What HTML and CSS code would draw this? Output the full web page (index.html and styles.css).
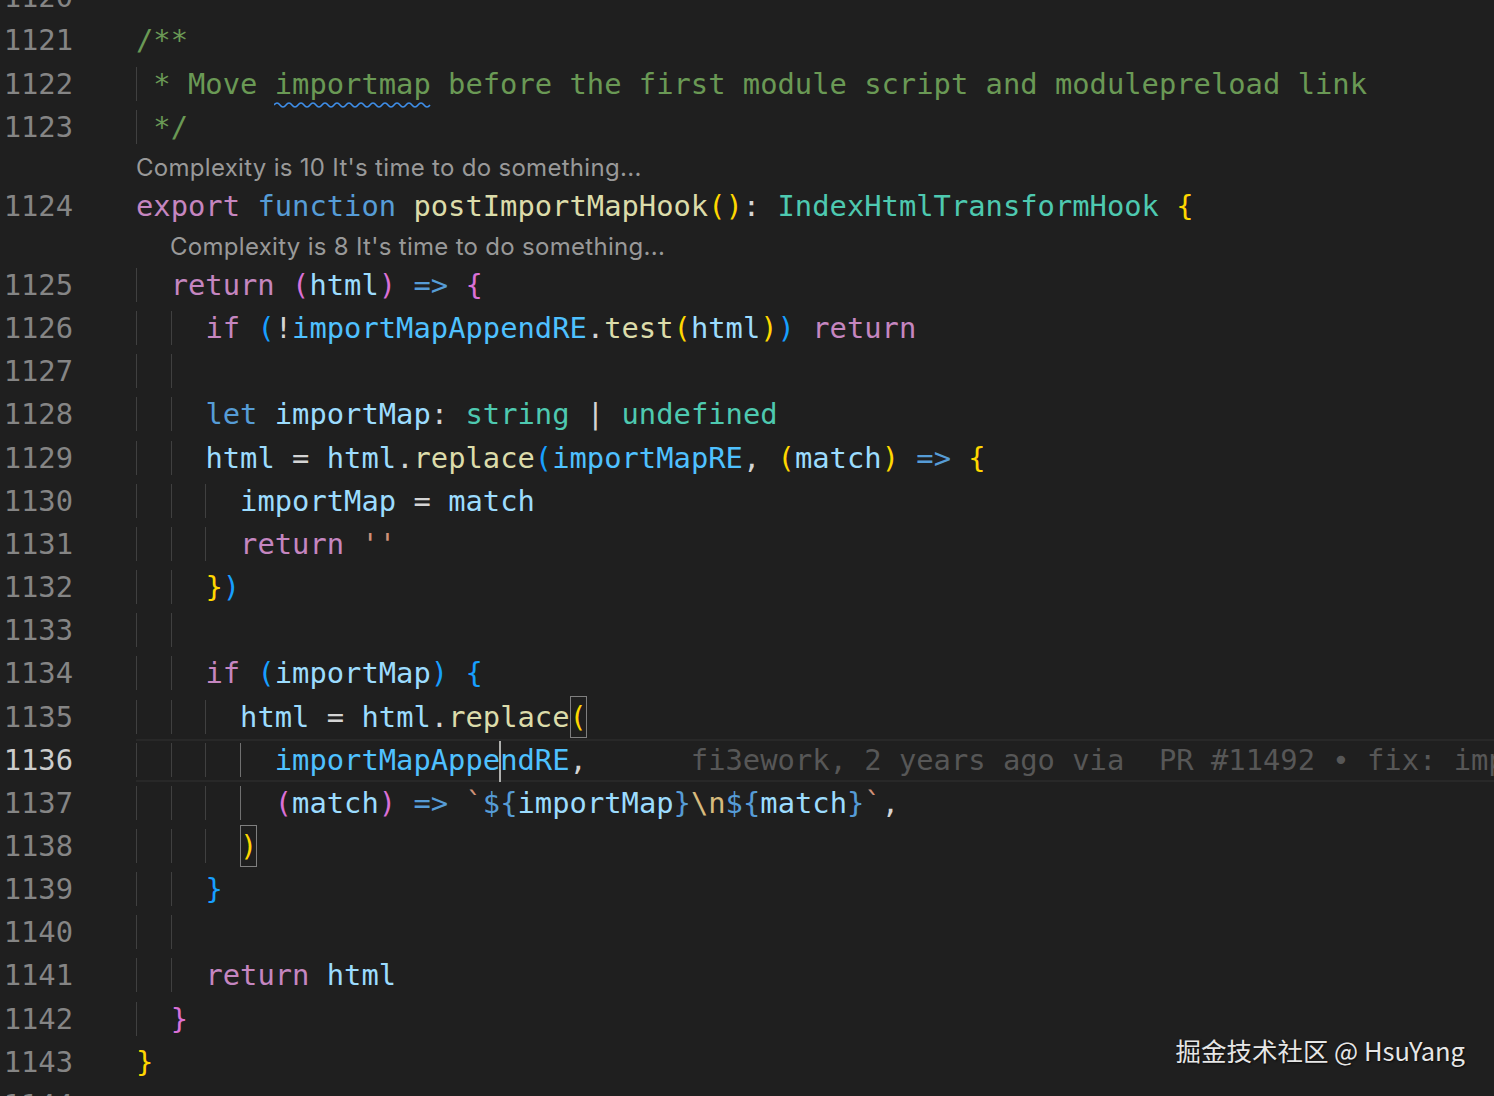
FILE: index.html
```html
<!DOCTYPE html>
<html>
<head>
<meta charset="utf-8">
<link rel="stylesheet" href="styles.css">
</head>
<body>
<div class="editor">
<div class="ln"><span class="num">1120</span><span class="code"></span></div>
<div class="ln"><span class="num">1121</span><span class="code"><span class="c">/**</span></span></div>
<div class="ln"><span class="num">1122</span><span class="code"><span class="ig"> </span><span class="c">* Move <span class="sq">importmap<svg class="wave" width="158" height="8" viewBox="0 0 158 8"><path d="M0 4 Q3 0 6 4 T12 4 T18 4 T24 4 T30 4 T36 4 T42 4 T48 4 T54 4 T60 4 T66 4 T72 4 T78 4 T84 4 T90 4 T96 4 T102 4 T108 4 T114 4 T120 4 T126 4 T132 4 T138 4 T144 4 T150 4 T156 4" fill="none" stroke="#3f8ee8" stroke-width="1.6"/></svg></span> before the first module script and modulepreload link</span></span></div>
<div class="ln"><span class="num">1123</span><span class="code"><span class="ig"> </span><span class="c">*/</span></span></div>
<div class="lens"><span class="lens-txt">Complexity is 10 It's time to do something...</span></div>
<div class="ln"><span class="num">1124</span><span class="code"><span class="k">export</span> <span class="s">function</span> <span class="f">postImportMapHook</span><span class="b1">()</span><span class="o">:</span> <span class="t">IndexHtmlTransformHook</span> <span class="b1">{</span></span></div>
<div class="lens lens-2"><span class="lens-txt">Complexity is 8 It's time to do something...</span></div>
<div class="ln"><span class="num">1125</span><span class="code"><span class="ig">  </span><span class="k">return</span> <span class="b2">(</span><span class="v">html</span><span class="b2">)</span> <span class="s">=&gt;</span> <span class="b2">{</span></span></div>
<div class="ln"><span class="num">1126</span><span class="code"><span class="ig">  </span><span class="ig">  </span><span class="k">if</span> <span class="b3">(</span><span class="o">!</span><span class="cn">importMapAppendRE</span><span class="o">.</span><span class="f">test</span><span class="b1">(</span><span class="v">html</span><span class="b1">)</span><span class="b3">)</span> <span class="k">return</span></span></div>
<div class="ln"><span class="num">1127</span><span class="code"><span class="ig">  </span><span class="ig">  </span></span></div>
<div class="ln"><span class="num">1128</span><span class="code"><span class="ig">  </span><span class="ig">  </span><span class="s">let</span> <span class="v">importMap</span><span class="o">:</span> <span class="t">string</span> <span class="o">|</span> <span class="t">undefined</span></span></div>
<div class="ln"><span class="num">1129</span><span class="code"><span class="ig">  </span><span class="ig">  </span><span class="v">html</span> <span class="o">=</span> <span class="v">html</span><span class="o">.</span><span class="f">replace</span><span class="b3">(</span><span class="cn">importMapRE</span><span class="o">,</span> <span class="b1">(</span><span class="v">match</span><span class="b1">)</span> <span class="s">=&gt;</span> <span class="b1">{</span></span></div>
<div class="ln"><span class="num">1130</span><span class="code"><span class="ig">  </span><span class="ig">  </span><span class="ig">  </span><span class="v">importMap</span> <span class="o">=</span> <span class="v">match</span></span></div>
<div class="ln"><span class="num">1131</span><span class="code"><span class="ig">  </span><span class="ig">  </span><span class="ig">  </span><span class="k">return</span> <span class="str">''</span></span></div>
<div class="ln"><span class="num">1132</span><span class="code"><span class="ig">  </span><span class="ig">  </span><span class="b1">}</span><span class="b3">)</span></span></div>
<div class="ln"><span class="num">1133</span><span class="code"><span class="ig">  </span><span class="ig">  </span></span></div>
<div class="ln"><span class="num">1134</span><span class="code"><span class="ig">  </span><span class="ig">  </span><span class="k">if</span> <span class="b3">(</span><span class="v">importMap</span><span class="b3">)</span> <span class="b3">{</span></span></div>
<div class="ln"><span class="num">1135</span><span class="code"><span class="ig">  </span><span class="ig">  </span><span class="ig">  </span><span class="v">html</span> <span class="o">=</span> <span class="v">html</span><span class="o">.</span><span class="f">replace</span><span class="b1 bm">(</span></span></div>
<div class="ln cur"><span class="num">1136</span><span class="code"><span class="ig">  </span><span class="ig">  </span><span class="ig">  </span><span class="ig a">  </span><span class="cn">importMapAppe<span class="cursor"></span>ndRE</span><span class="o">,</span><span class="blame">fi3ework, 2 years ago via  PR #11492 • fix: importMap should be inserted before</span></span></div>
<div class="ln"><span class="num">1137</span><span class="code"><span class="ig">  </span><span class="ig">  </span><span class="ig">  </span><span class="ig a">  </span><span class="b2">(</span><span class="v">match</span><span class="b2">)</span> <span class="s">=&gt;</span> <span class="str">`</span><span class="s">${</span><span class="v">importMap</span><span class="s">}</span><span class="esc">\n</span><span class="s">${</span><span class="v">match</span><span class="s">}</span><span class="str">`</span><span class="o">,</span></span></div>
<div class="ln"><span class="num">1138</span><span class="code"><span class="ig">  </span><span class="ig">  </span><span class="ig">  </span><span class="b1 bm">)</span></span></div>
<div class="ln"><span class="num">1139</span><span class="code"><span class="ig">  </span><span class="ig">  </span><span class="b3">}</span></span></div>
<div class="ln"><span class="num">1140</span><span class="code"><span class="ig">  </span><span class="ig">  </span></span></div>
<div class="ln"><span class="num">1141</span><span class="code"><span class="ig">  </span><span class="ig">  </span><span class="k">return</span> <span class="v">html</span></span></div>
<div class="ln"><span class="num">1142</span><span class="code"><span class="ig">  </span><span class="b2">}</span></span></div>
<div class="ln"><span class="num">1143</span><span class="code"><span class="b1">}</span></span></div>
<div class="ln"><span class="num">1144</span><span class="code"></span></div>
</div>
<div class="watermark">掘金技术社区 @ HsuYang</div>
</body>
</html>
```
FILE: styles.css
```css
html, body {
  margin: 0;
  padding: 0;
  height: 100%;
  overflow: hidden;
  background: #1f1f1f;
}
body {
  position: relative;
  font-family: "DejaVu Sans Mono", monospace;
  font-size: 28.8px;
}
.editor {
  margin-top: -23.8px;
}
.ln {
  display: flex;
  height: 43.17px;
  line-height: 43.17px;
  color: #d4d4d4;
}
.num {
  flex: none;
  width: 73px;
  margin-right: 63px;
  text-align: right;
  color: #858585;
}
.cur .num { color: #cccccc; }
.code {
  flex: 1;
  white-space: pre;
}
.cur .code {
  min-width: 0;
  overflow: hidden;
  box-shadow: inset 0 2px 0 #282828, inset 0 -2px 0 #282828;
}
.ig { box-shadow: inset 1px 0 0 #404040; }
.ig.a { box-shadow: inset 1px 0 0 #707070; }
.c { color: #6a9955; }
.k { color: #c586c0; }
.s { color: #569cd6; }
.f { color: #dcdcaa; }
.v { color: #9cdcfe; }
.cn { color: #4fc1ff; }
.t { color: #4ec9b0; }
.o { color: #d4d4d4; }
.str { color: #ce9178; }
.esc { color: #d7ba7d; }
.b1 { color: #ffd700; }
.b2 { color: #da70d6; }
.b3 { color: #179fff; }
.bm {
  display: inline-block;
  height: 42px;
  line-height: 43.17px;
  box-shadow: inset 0 0 0 1px #7f7f7f;
}
.sq {
  position: relative;
}
.wave {
  position: absolute;
  left: -1px;
  top: 34px;
  display: block;
}
.cursor {
  display: inline-block;
  width: 0;
  height: 39px;
  vertical-align: middle;
  box-shadow: 0 0 0 1px #aeafad;
}
.blame {
  margin-left: 6ch;
  color: #575757;
}
.lens {
  height: 36px;
  line-height: 38px;
  padding-left: 136px;
  font-family: "Inter", "Liberation Sans", sans-serif;
  font-size: 24px;
  letter-spacing: 0.3px;
  color: #999999;
}
.lens-2 { padding-left: 170px; }
.watermark {
  position: absolute;
  right: 29px;
  bottom: 28px;
  font-family: "Noto Sans CJK SC", "Inter", sans-serif;
  font-size: 25.5px;
  color: #e6e6e6;
  text-shadow: 1px 1px 2px rgba(0,0,0,0.7);
}
```
